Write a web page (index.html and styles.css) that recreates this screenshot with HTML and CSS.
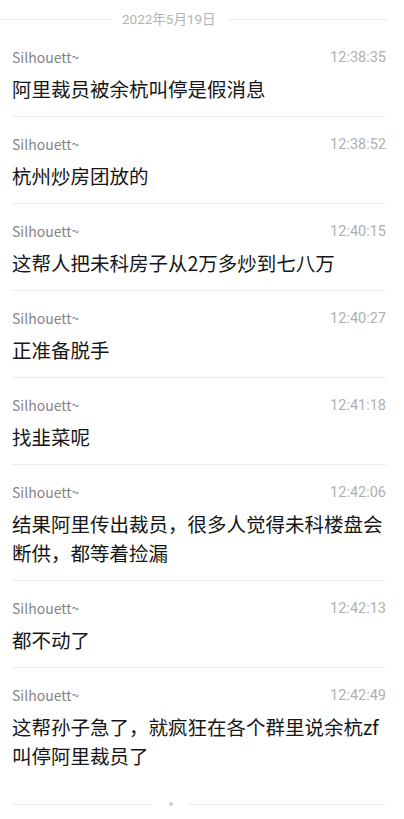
FILE: index.html
```html
<!DOCTYPE html>
<html lang="zh-CN">
<head>
<meta charset="utf-8">
<link rel="stylesheet" href="styles.css">
</head>
<body>
<div class="page">
  <div class="date-row">
    <span class="date-line date-line-left"></span>
    <span class="date">2022年5月19日</span>
    <span class="date-line date-line-right"></span>
  </div>
  <div class="list">
    <div class="msg">
      <div class="meta"><span class="name">Silhouett~</span><span class="time">12:38:35</span></div>
      <div class="text">阿里裁员被余杭叫停是假消息</div>
    </div>
    <div class="msg">
      <div class="meta"><span class="name">Silhouett~</span><span class="time">12:38:52</span></div>
      <div class="text">杭州炒房团放的</div>
    </div>
    <div class="msg">
      <div class="meta"><span class="name">Silhouett~</span><span class="time">12:40:15</span></div>
      <div class="text">这帮人把未科房子从2万多炒到七八万</div>
    </div>
    <div class="msg">
      <div class="meta"><span class="name">Silhouett~</span><span class="time">12:40:27</span></div>
      <div class="text">正准备脱手</div>
    </div>
    <div class="msg">
      <div class="meta"><span class="name">Silhouett~</span><span class="time">12:41:18</span></div>
      <div class="text">找韭菜呢</div>
    </div>
    <div class="msg">
      <div class="meta"><span class="name">Silhouett~</span><span class="time">12:42:06</span></div>
      <div class="text">结果阿里传出裁员，很多人觉得未科楼盘会断供，都等着捡漏</div>
    </div>
    <div class="msg">
      <div class="meta"><span class="name">Silhouett~</span><span class="time">12:42:13</span></div>
      <div class="text">都不动了</div>
    </div>
    <div class="msg msg-last">
      <div class="meta"><span class="name">Silhouett~</span><span class="time">12:42:49</span></div>
      <div class="text">这帮孙子急了，就疯狂在各个群里说余杭zf叫停阿里裁员了</div>
    </div>
  </div>
  <div class="footer">
    <span class="foot-line foot-line-left"></span>
    <span class="foot-dot"></span>
    <span class="foot-line foot-line-right"></span>
  </div>
</div>
</body>
</html>
```
FILE: styles.css
```css
* { box-sizing: border-box; }
html, body {
  margin: 0;
  padding: 0;
  background: #ffffff;
}
body {
  font-family: "Noto Sans CJK SC", "Noto Sans", sans-serif;
  color: #1a1a1a;
}
.page {
  width: 404px;
  height: 819px;
  overflow: hidden;
}
.date-row {
  display: flex;
  align-items: center;
  height: 30px;
  padding: 10px 17px 2px 0;
}
.date-line {
  height: 1px;
  background: #ececec;
}
.date-line-left { width: 110px; }
.date-line-right { flex: 1; }
.date {
  margin: 0 12px;
  font-family: Roboto, "Noto Sans CJK SC", sans-serif;
  font-size: 13.5px;
  line-height: 18px;
  color: #b3b3b3;
  white-space: nowrap;
}
.list {
  padding: 0 18px 0 12px;
}
.msg {
  padding: 18px 0 13px;
  border-bottom: 1px solid #ececec;
}
.msg-last { border-bottom: none; }
.meta {
  display: flex;
  justify-content: space-between;
  align-items: center;
  height: 18px;
}
.name {
  font-family: "Noto Sans CJK SC", sans-serif;
  font-size: 14px;
  color: #858585;
}
.time {
  font-family: Roboto, sans-serif;
  font-size: 14.5px;
  color: #b0b0b0;
}
.text {
  margin-top: 8px;
  font-size: 19.5px;
  line-height: 29px;
  color: #161616;
}
.footer {
  display: flex;
  align-items: center;
  margin-top: 19px;
  padding: 0 18px 0 12px;
}
.foot-line {
  height: 1px;
  background: #ececec;
}
.foot-line-left { width: 140px; }
.foot-line-right { flex: 1; }
.foot-dot {
  width: 4px;
  height: 4px;
  border-radius: 50%;
  background: #d0d0d0;
  margin: 0 15px 0 17px;
}
```
